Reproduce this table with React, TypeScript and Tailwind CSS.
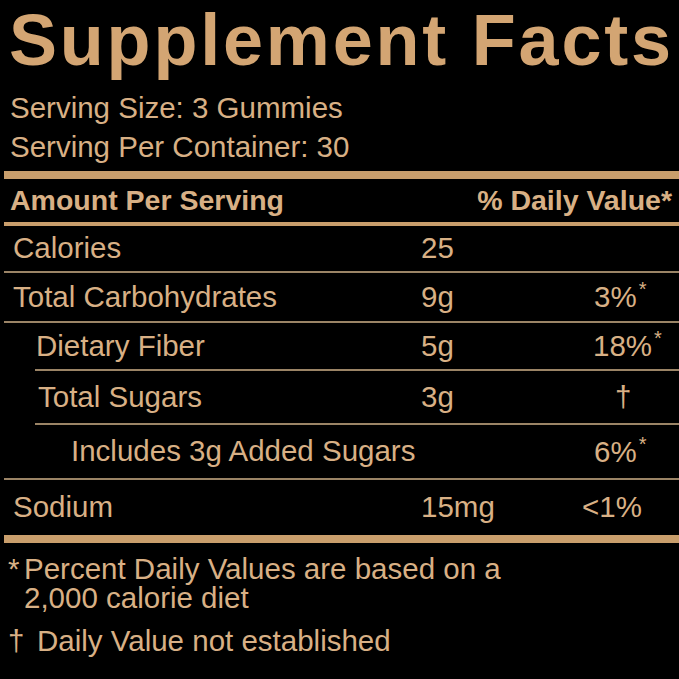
type Row = {
  label: string
  labelPad: string
  amount: string
  dv: string
  star: boolean
  dvPad: string
  height: string
  line: 'thin' | 'indent' | 'thick'
}

const rows: Row[] = [
  { label: 'Calories', labelPad: 'pl-[9px]', amount: '25', dv: '', star: false, dvPad: 'pl-0', height: 'h-[45px]', line: 'thin' },
  { label: 'Total Carbohydrates', labelPad: 'pl-[9px]', amount: '9g', dv: '3%', star: true, dvPad: 'pl-[12px]', height: 'h-[48px]', line: 'thin' },
  { label: 'Dietary Fiber', labelPad: 'pl-[32px]', amount: '5g', dv: '18%', star: true, dvPad: 'pl-[11px]', height: 'h-[46px]', line: 'indent' },
  { label: 'Total Sugars', labelPad: 'pl-[34px]', amount: '3g', dv: '†', star: false, dvPad: 'pl-[33px]', height: 'h-[52px]', line: 'indent' },
  { label: 'Includes 3g Added Sugars', labelPad: 'pl-[67px]', amount: '', dv: '6%', star: true, dvPad: 'pl-[12px]', height: 'h-[53px]', line: 'thin' },
  { label: 'Sodium', labelPad: 'pl-[9px]', amount: '15mg', dv: '<1%', star: false, dvPad: 'pl-0', height: 'h-[55px]', line: 'thick' },
]

const Divider = ({ kind }: { kind: Row['line'] }) => {
  if (kind === 'thick') return <div className="h-[8px] bg-[#c99e6c]" />
  if (kind === 'indent') return <div className="ml-[31px] h-[2px] bg-[#9b8466]" />
  return <div className="h-[2px] bg-[#9b8466]" />
}

export default function App() {
  return (
    <div className="h-[679px] w-[679px] overflow-hidden bg-black font-['Liberation_Sans',Arial,sans-serif] text-[#d8b085]">
      <h1 className="whitespace-nowrap pl-[9px] text-[72px] font-bold leading-[80px] tracking-[2.8px] text-[#d3a573]">
        Supplement Facts
      </h1>

      <div className="mt-[8px] pl-[10px] text-[29.5px] leading-[39px]">
        <p>Serving Size: 3 Gummies</p>
        <p>Serving Per Container: 30</p>
      </div>

      <div className="ml-[4px] mt-[5px]">
        <div className="h-[8px] bg-[#c99e6c]" />
        <div className="flex h-[43px] items-center justify-between pl-[6px] pr-[7px] text-[28.5px] font-bold">
          <span>Amount Per Serving</span>
          <span>% Daily Value*</span>
        </div>
        <div className="h-[4px] bg-[#c99e6c]" />

        {rows.map((row) => (
          <div key={row.label}>
            <div className={`flex items-center text-[29.5px] ${row.height}`}>
              <div className={`w-[417px] ${row.labelPad}`}>{row.label}</div>
              <div className="w-[161px]">{row.amount}</div>
              <div className={`flex-1 ${row.dvPad}`}>
                {row.dv}
                {row.star && <span className="ml-[2px] align-super text-[20px]">*</span>}
              </div>
            </div>
            <Divider kind={row.line} />
          </div>
        ))}
      </div>

      <div className="mt-[11px] pl-[8px] text-[29.5px] leading-[29px]">
        <div className="flex">
          <span className="w-[16px]">*</span>
          <p>
            Percent Daily Values are based on a
            <br />
            2,000 calorie diet
          </p>
        </div>
        <div className="mt-[14px] flex">
          <span className="w-[29px]">†</span>
          <p>Daily Value not established</p>
        </div>
      </div>
    </div>
  )
}
